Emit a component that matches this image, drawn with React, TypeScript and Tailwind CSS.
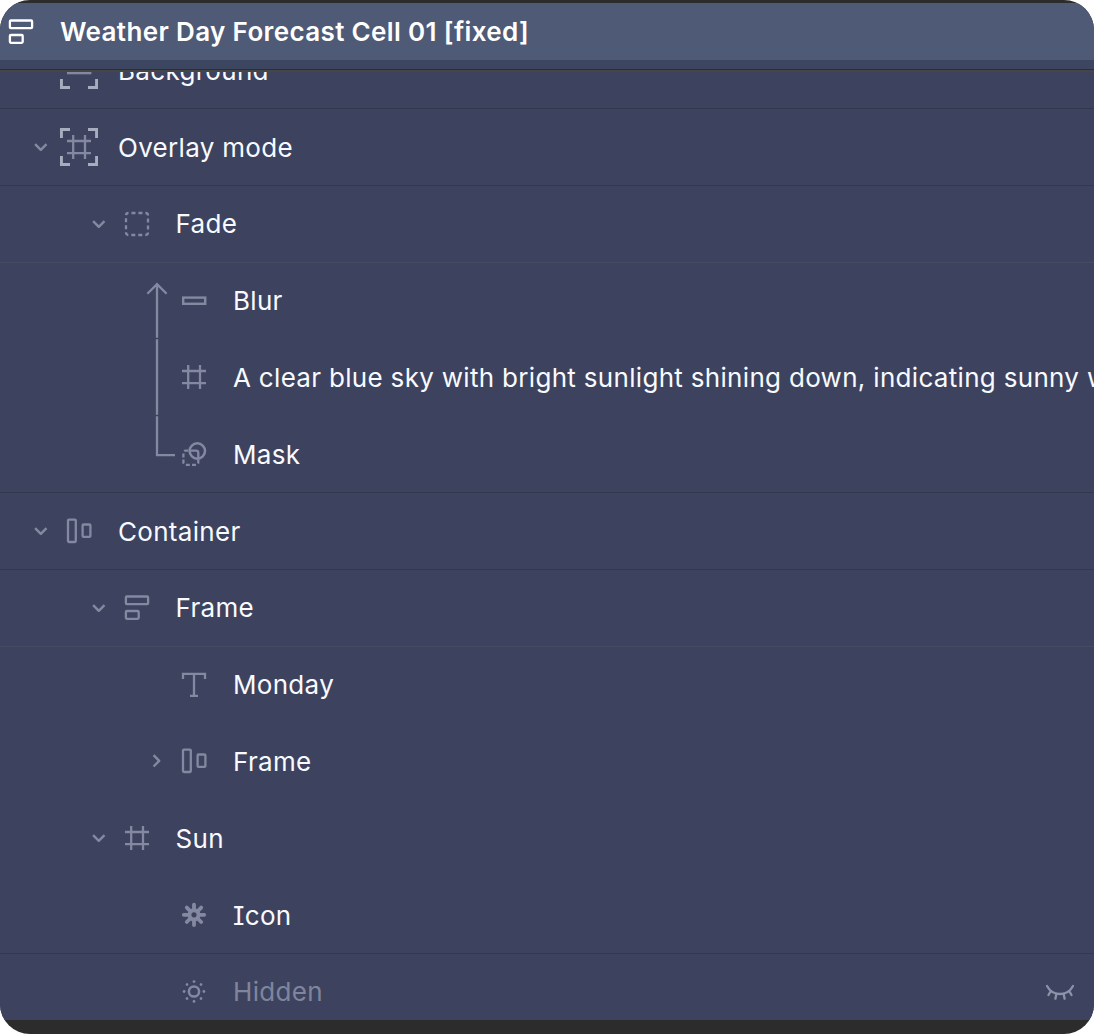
import React from 'react';
import clsx from 'clsx';

type IconName =
  | 'frame'
  | 'group'
  | 'rect'
  | 'mask'
  | 'columns'
  | 'stack'
  | 'text'
  | 'asterisk'
  | 'sun'
  | 'frameSelected'
  | 'rectSelected';

interface Layer {
  name: string;
  depth: 0 | 1 | 2;
  icon: IconName;
  toggle?: 'open' | 'closed';
  mask?: 'start' | 'middle' | 'end';
  divider?: 'strong' | 'soft';
  hidden?: boolean;
}

const layers: Layer[] = [
  { name: 'Background', depth: 0, icon: 'rectSelected', divider: 'strong' },
  { name: 'Overlay mode', depth: 0, icon: 'frameSelected', toggle: 'open', divider: 'strong' },
  { name: 'Fade', depth: 1, icon: 'group', toggle: 'open', divider: 'soft' },
  { name: 'Blur', depth: 2, icon: 'rect', mask: 'end' },
  {
    name: 'A clear blue sky with bright sunlight shining down, indicating sunny weather',
    depth: 2,
    icon: 'frame',
    mask: 'middle',
  },
  { name: 'Mask', depth: 2, icon: 'mask', mask: 'start', divider: 'strong' },
  { name: 'Container', depth: 0, icon: 'columns', toggle: 'open', divider: 'strong' },
  { name: 'Frame', depth: 1, icon: 'stack', toggle: 'open', divider: 'soft' },
  { name: 'Monday', depth: 2, icon: 'text' },
  { name: 'Frame', depth: 2, icon: 'columns', toggle: 'closed' },
  { name: 'Sun', depth: 1, icon: 'frame', toggle: 'open' },
  { name: 'Icon', depth: 2, icon: 'asterisk', divider: 'strong' },
  { name: 'Hidden', depth: 2, icon: 'sun', hidden: true },
];

const indents = ['pl-[22px]', 'pl-[79.5px]', 'pl-[137px]'];

const hashPath = 'M13.2 7v24M25 7v24M7 13h24M7 25.2h24';
const spokes = [0, 45, 90, 135, 180, 225, 270, 315];

const Corners = () => (
  <path d="M1.4 10V1.4H10M28 1.4h8.6V10M36.6 28v8.6H28M10 36.6H1.4V28" stroke="#a7acbf" strokeWidth={3} />
);

const shapes: Record<IconName, React.ReactNode> = {
  frame: <path d={hashPath} />,
  frameSelected: (
    <>
      <Corners />
      <path d={hashPath} />
    </>
  ),
  rect: <rect x="8.2" y="15.6" width="22" height="6.2" strokeWidth={2.4} />,
  rectSelected: (
    <>
      <Corners />
      <rect x="8.2" y="15.9" width="22" height="6.2" strokeWidth={2.4} />
    </>
  ),
  group: <rect x="8" y="8" width="22" height="22" rx="2.5" strokeDasharray="4 2.98" strokeDashoffset="4" />,
  mask: (
    <>
      <circle cx="22.3" cy="16" r="7.700" strokeWidth={2.5} />
      <path d="M15.5 15.6h5.600a2.200 2.200 0 0 1 2.200 2.200v5.600" />
      <path
        d="M14 15.600h-3.200a2.400 2.400 0 0 0-2.400 2.400v9.400a2.400 2.400 0 0 0 2.400 2.400h10.100a2.400 2.400 0 0 0 2.400-2.400v-3"
        strokeDasharray="4 2.200"
        strokeDashoffset="-0.800"
      />
    </>
  ),
  columns: (
    <>
      <rect x="8" y="7.6" width="7.8" height="22.4" rx="1" />
      <rect x="22.6" y="12.5" width="7.8" height="12.4" rx="1" />
    </>
  ),
  stack: (
    <>
      <rect x="7.9" y="7.5" width="22.2" height="7.7" rx="1" />
      <rect x="7.9" y="22" width="12.8" height="7.8" rx="1" />
    </>
  ),
  text: <path d="M8 13V7.9h22V13M19 7.9v21.6M15 29.8h8" />,
  asterisk: (
    <>
      <circle cx="19" cy="18.8" r="4.6" strokeWidth={4} />
      {spokes.map((angle) => (
        <path key={angle} d="M19 13.200V8.600" strokeWidth={3.8} strokeLinecap="round" transform={`rotate(${angle} 19 18.8)`} />
      ))}
    </>
  ),
  sun: (
    <>
      <circle cx="19" cy="18.5" r="5.1" strokeWidth={2.5} />
      {spokes.map((angle) => (
        <circle key={angle} cx="19" cy="8.6" r="1.4" fill="currentColor" stroke="none" transform={`rotate(${angle} 19 18.5)`} />
      ))}
    </>
  ),
};

const LayerIcon: React.FC<{ name: IconName; className?: string }> = ({ name, className }) => (
  <svg
    viewBox="0 0 38 38"
    className={clsx('h-[38px] w-[38px] shrink-0', className)}
    fill="none"
    stroke="currentColor"
    strokeWidth={2.3}
  >
    {shapes[name]}
  </svg>
);

const Chevron: React.FC<{ state: 'open' | 'closed' }> = ({ state }) => (
  <svg viewBox="0 0 38 38" className="h-[38px] w-[38px]" fill="none" stroke="currentColor" strokeWidth={2.4} strokeLinejoin="round">
    <path d={state === 'open' ? 'M13.100 16.200l5.700 5.600 5.700-5.600' : 'M16.600 13.100l5.600 5.700-5.600 5.700'} />
  </svg>
);

const maskPaths = {
  end: 'M20 75.8V22M10.4 31.8L20 22.2l9.600 9.600',
  middle: 'M20 75.8V0.2',
  start: 'M20 0.2v39h18',
};

const LayerRow: React.FC<{ layer: Layer }> = ({ layer }) => (
  <div
    className={clsx(
      'flex h-[76.8px] shrink-0 items-center border-b pr-[19px]',
      indents[layer.depth],
      layer.divider === 'strong' && 'border-[#33384f]',
      layer.divider === 'soft' && 'border-[#454b63]',
      !layer.divider && 'border-transparent'
    )}
  >
    <div className="flex w-[38px] shrink-0 justify-center text-[#8489a1]">
      {layer.toggle && <Chevron state={layer.toggle} />}
      {layer.mask && (
        <svg viewBox="0 0 38 76.8" className="h-[76.8px] w-[38px]" fill="none" stroke="currentColor" strokeWidth={2.3}>
          <path d={maskPaths[layer.mask]} />
        </svg>
      )}
    </div>
    <LayerIcon name={layer.icon} className="text-[#8489a1]" />
    <span
      className={clsx(
        'ml-5 flex-1 whitespace-nowrap pt-px text-[26px] leading-8 tracking-[0.31px]',
        layer.hidden ? 'text-[#80859c]' : 'text-[#f8faff]'
      )}
    >
      {layer.name}
    </span>
    {layer.hidden && (
      <svg viewBox="0 0 30 18" className="h-[18px] w-[30px] shrink-0 text-[#8d92a9]" fill="none" stroke="currentColor" strokeWidth={2.3} strokeLinecap="round">
        <path d="M2 3C4.800 8.300 9.500 11 15 11S25.200 8.300 28 3M5.800 8l-2.300 4M11.400 10.700l-1 5M18.600 10.700l1 5M24.200 8l2.300 4" />
      </svg>
    )}
  </div>
);

export default function App() {
  return (
    <div className="h-[1034px] w-[1094px] bg-white">
      <div className="flex h-full flex-col overflow-hidden rounded-[30px] bg-[#2c2c2c] pt-[3px] font-['Inter',sans-serif] [font-feature-settings:'cv08']">
        {/* Selected parent */}
        <div className="flex h-[57px] shrink-0 items-center bg-[#4f5a76] pl-[2px] text-white">
          <LayerIcon name="stack" />
          <span className="ml-5 whitespace-nowrap text-[26px] font-semibold leading-8 tracking-[0.36px]">
            Weather Day Forecast Cell 01 [fixed]
          </span>
        </div>
        <div className="h-[9px] shrink-0 bg-[#3c4661]" />
        <div className="h-[3px] shrink-0 border-t border-[#2f2c36] bg-[#464745]" />

        {/* Layer list, scrolled part way through its first row */}
        <div className="h-[948px] shrink-0 overflow-hidden bg-[#3d435e]">
          <div className="-mt-[39.6px] flex flex-col">
            {layers.map((layer, i) => (
              <LayerRow key={i} layer={layer} />
            ))}
          </div>
        </div>
      </div>
    </div>
  );
}
